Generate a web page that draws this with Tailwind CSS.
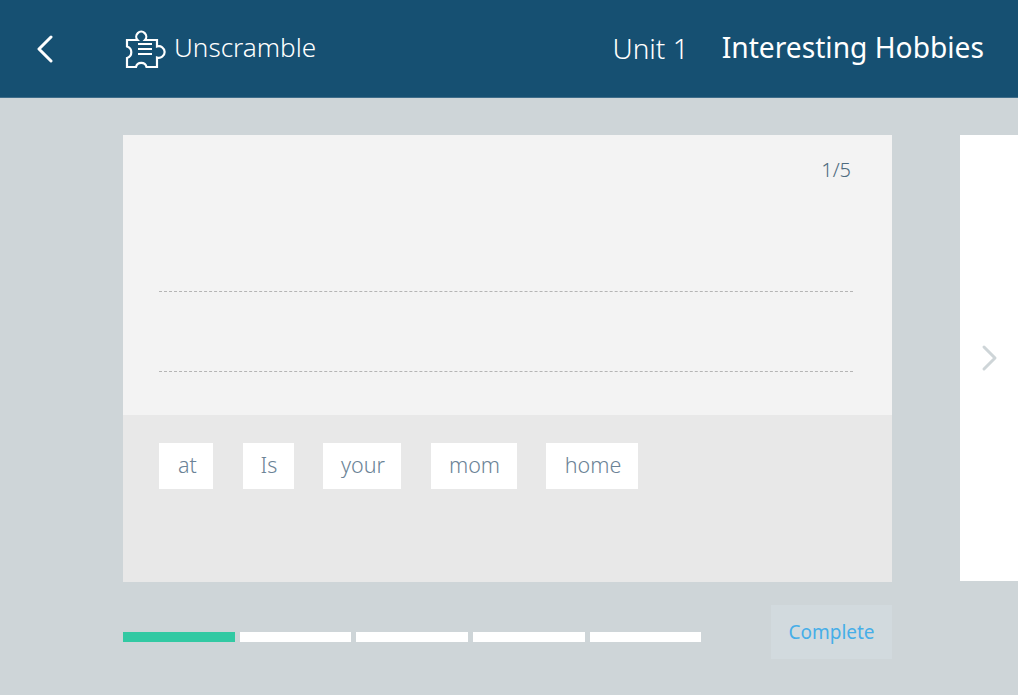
<!DOCTYPE html>
<html lang="en">
  <head>
    <meta charset="UTF-8" />
    <title>Unscramble</title>
    <script src="https://cdn.jsdelivr.net/npm/@tailwindcss/browser@4"></script>
  </head>
  <body class="w-[1018px] h-[695px] overflow-hidden bg-[#ced5d8] font-['Noto_Sans','Open_Sans',sans-serif]">
    <!-- Header -->
    <header class="h-[98px] bg-[#165072] border-b border-[#3f6d8a] flex items-center text-white">
      <div class="w-[123px] pl-[36px] flex items-center">
        <svg width="18" height="28" viewBox="0 0 18 28" fill="none" stroke="white" stroke-width="3" stroke-linecap="round" stroke-linejoin="round">
          <path d="M15 2 L3 14 L15 26" />
        </svg>
      </div>
      <div class="ml-[1px] flex items-center gap-[6px]">
        <svg width="44" height="44" viewBox="124 28 44 44" fill="none" stroke="white" stroke-width="2.2">
          <path d="M127 41 H137.5 A5 5 0 1 1 145 41 H157 V47.5 A5.8 5.8 0 1 1 157 58.5 V68 H146.5 A5.4 5.4 0 0 0 136 68 H127 V59 A6 6 0 0 0 127 47.5 Z" />
          <path d="M138 45 H152 M138 50 H152 M138 55 H152" stroke-width="1.8" />
        </svg>
        <span class="pb-[2px] text-[26.1px] font-light leading-none">Unscramble</span>
      </div>
      <span class="ml-auto pb-[2px] text-[28px] font-light leading-none">Unit 1</span>
      <span class="ml-[33px] mr-[34px] pb-[2px] text-[28.2px] font-normal leading-none">Interesting Hobbies</span>
    </header>

    <main class="relative pl-[123px] pt-[37px]">
      <!-- Card -->
      <section class="w-[769px] h-[447px] flex flex-col">
        <div class="h-[280px] bg-[#f3f3f3] pl-[36px] pr-[39px] pt-[21px] flex flex-col">
          <div class="pr-[2px] text-right text-[20px] font-light leading-[28px] text-[#4f6b7f]">1/5</div>
          <div class="mt-[107px] border-t border-dashed border-[#b5b5b5]"></div>
          <div class="mt-[79px] border-t border-dashed border-[#b5b5b5]"></div>
        </div>
        <div class="flex-1 bg-[#e8e8e8] px-[36px] pt-[28px] flex items-start gap-[29.5px] text-[#6b8396] text-[21.5px] font-light">
          <span class="w-[54px] h-[46px] pl-[3px] pb-[2px] bg-white flex items-center justify-center">at</span>
          <span class="w-[51px] h-[46px] pl-[2px] pb-[2px] bg-white flex items-center justify-center">Is</span>
          <span class="w-[78px] h-[46px] pl-[2px] pb-[2px] bg-white flex items-center justify-center">your</span>
          <span class="w-[86px] h-[46px] pl-[2px] pb-[2px] bg-white flex items-center justify-center">mom</span>
          <span class="w-[92px] h-[46px] pl-[2px] pb-[2px] bg-white flex items-center justify-center">home</span>
        </div>
      </section>

      <!-- Next card peeking in from the right -->
      <div class="absolute left-[960px] top-[37px] w-[58px] h-[446px] bg-white flex items-center pl-[21px]">
        <svg width="18" height="28" viewBox="0 0 18 28" fill="none" stroke="#ced5d8" stroke-width="3" stroke-linecap="round" stroke-linejoin="round">
          <path d="M3 3 L14 14 L3 25" />
        </svg>
      </div>

      <!-- Progress and action -->
      <div class="w-[769px] mt-[23px] flex items-start">
        <div class="w-[578.5px] mt-[27px] grid grid-cols-5 gap-[5px]">
          <div class="h-[10px] bg-[#32c9a3]"></div>
          <div class="h-[10px] bg-white"></div>
          <div class="h-[10px] bg-white"></div>
          <div class="h-[10px] bg-white"></div>
          <div class="h-[10px] bg-white"></div>
        </div>
        <button class="ml-auto w-[121px] h-[54px] bg-[#d2dade] text-[#46aee8] text-[19px] font-normal">Complete</button>
      </div>
    </main>
  </body>
</html>
